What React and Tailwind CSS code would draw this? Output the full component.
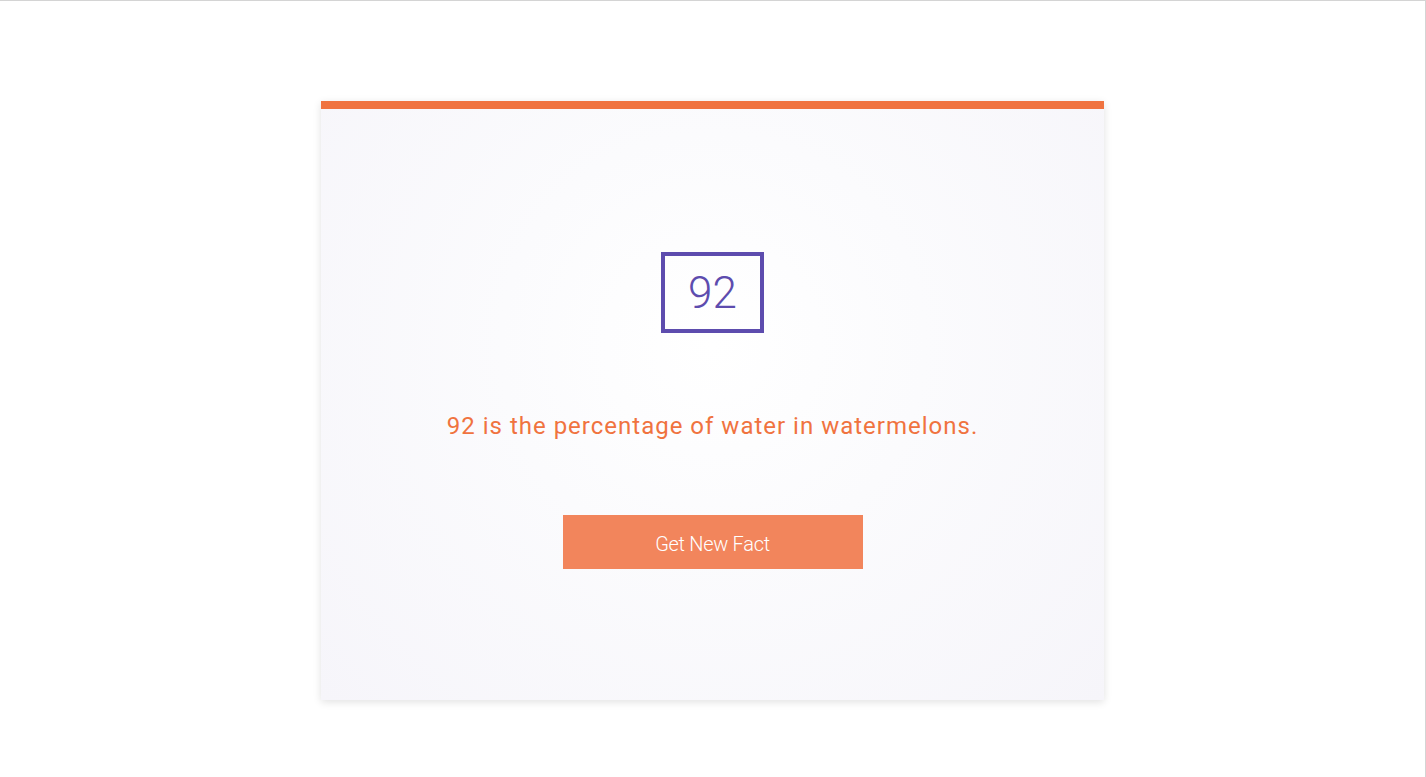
export default function App() {
  return (
    <div className="w-[1426px] h-[777px] bg-white border-t border-r border-[#d4d4d4] flex justify-center overflow-hidden" style={{ fontFamily: "Roboto, 'Liberation Sans', sans-serif" }}>
      <div className="mt-[100px] w-[783px] h-[599px] border-t-8 border-[#f07340] bg-[radial-gradient(circle_at_50%_40%,#ffffff_0%,#fbfbfd_40%,#f6f5fa_100%)] shadow-[0_2px_8px_rgba(0,0,0,0.12)] flex flex-col items-center">
        <div className="mt-[143px] w-[103px] h-[81px] border-4 border-[#5d4cae] flex items-center justify-center">
          <span className="text-[44px] font-light text-[#5d4cae] leading-none">92</span>
        </div>
        <p className="mt-[78px] text-[24px] leading-[30px] tracking-[1px] text-[#f0733f]">
          92 is the percentage of water in watermelons.
        </p>
        <button className="mt-[74px] w-[300px] h-[54px] pt-[3px] bg-[#f2855c] text-white text-[20px] font-light tracking-[-0.3px]">
          Get New Fact
        </button>
      </div>
    </div>
  );
}
